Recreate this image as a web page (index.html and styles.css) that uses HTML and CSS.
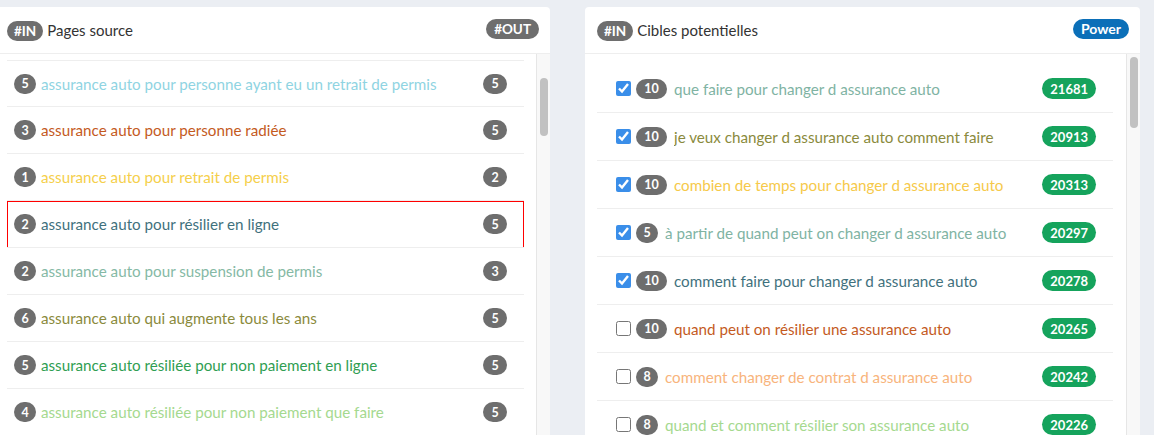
FILE: index.html
```html
<!DOCTYPE html>
<html lang="fr">
<head>
<meta charset="utf-8">
<title>Maillage</title>
<link rel="stylesheet" href="styles.css">
</head>
<body>
<div class="page">
  <section class="card card-left">
    <header class="card-head">
      <span class="pill">#IN</span>
      <span class="title">Pages source</span>
      <span class="pill pill-out">#OUT</span>
    </header>
    <div class="card-body">
      <ul class="list list-left">
        <li class="row"><span class="num">5</span><span class="label c-cyan">assurance auto pour personne ayant eu un retrait de permis</span><span class="num num-out">5</span></li>
        <li class="row"><span class="num">3</span><span class="label c-brown">assurance auto pour personne radiée</span><span class="num num-out">5</span></li>
        <li class="row"><span class="num">1</span><span class="label c-yellow">assurance auto pour retrait de permis</span><span class="num num-out">2</span></li>
        <li class="row selected"><span class="num">2</span><span class="label c-teal">assurance auto pour résilier en ligne</span><span class="num num-out">5</span></li>
        <li class="row"><span class="num">2</span><span class="label c-sage">assurance auto pour suspension de permis</span><span class="num num-out">3</span></li>
        <li class="row"><span class="num">6</span><span class="label c-olive">assurance auto qui augmente tous les ans</span><span class="num num-out">5</span></li>
        <li class="row"><span class="num">5</span><span class="label c-green">assurance auto résiliée pour non paiement en ligne</span><span class="num num-out">5</span></li>
        <li class="row"><span class="num">4</span><span class="label c-lime">assurance auto résiliée pour non paiement que faire</span><span class="num num-out">5</span></li>
      </ul>
      <div class="scrollbar"><div class="thumb thumb-left"></div></div>
    </div>
  </section>

  <section class="card card-right">
    <header class="card-head">
      <span class="pill">#IN</span>
      <span class="title">Cibles potentielles</span>
      <span class="pill pill-power">Power</span>
    </header>
    <div class="card-body">
      <ul class="list list-right">
        <li class="row"><input type="checkbox" class="check" checked><span class="num num-wide">10</span><span class="label c-sage2">que faire pour changer d assurance auto</span><span class="score">21681</span></li>
        <li class="row"><input type="checkbox" class="check" checked><span class="num num-wide">10</span><span class="label c-olive">je veux changer d assurance auto comment faire</span><span class="score">20913</span></li>
        <li class="row"><input type="checkbox" class="check" checked><span class="num num-wide">10</span><span class="label c-yellow2">combien de temps pour changer d assurance auto</span><span class="score">20313</span></li>
        <li class="row"><input type="checkbox" class="check" checked><span class="num">5</span><span class="label c-sage2">à partir de quand peut on changer d assurance auto</span><span class="score">20297</span></li>
        <li class="row"><input type="checkbox" class="check" checked><span class="num num-wide">10</span><span class="label c-teal">comment faire pour changer d assurance auto</span><span class="score">20278</span></li>
        <li class="row"><input type="checkbox" class="check"><span class="num num-wide">10</span><span class="label c-brown">quand peut on résilier une assurance auto</span><span class="score">20265</span></li>
        <li class="row"><input type="checkbox" class="check"><span class="num">8</span><span class="label c-peach">comment changer de contrat d assurance auto</span><span class="score">20242</span></li>
        <li class="row"><input type="checkbox" class="check"><span class="num">8</span><span class="label c-lime">quand et comment résilier son assurance auto</span><span class="score">20226</span></li>
      </ul>
      <div class="scrollbar"><div class="thumb thumb-right"></div></div>
    </div>
  </section>
</div>
</body>
</html>
```

FILE: styles.css
```css
* { box-sizing: border-box; }
html, body { margin: 0; padding: 0; }
body {
  background: #ebeef3;
  font-family: "Lato", "Liberation Sans", sans-serif;
  color: #333;
  overflow: hidden;
}
.page {
  display: flex;
  gap: 35px;
  padding-top: 7px;
  height: 435px;
  overflow: hidden;
}
.card {
  background: #fff;
  border-radius: 0 4px 0 0;
  display: flex;
  flex-direction: column;
  overflow: hidden;
}
.card-left { width: 550px; }
.card-right { width: 555px; border-radius: 4px 4px 0 0; }

.card-head {
  height: 47px;
  border-bottom: 1px solid #eeeeee;
  display: flex;
  align-items: center;
  padding: 0 11px 1px 7px;
}
.card-right .card-head { padding: 0 11px 1px 12px; }
.title {
  font-size: 15px;
  color: #333;
  margin-left: 4px;
  flex: 1;
}
.pill {
  display: inline-flex;
  align-items: center;
  justify-content: center;
  height: 20px;
  padding: 0 7px;
  border-radius: 10px;
  background: #6e6e6e;
  color: #fff;
  font-weight: 700;
  font-size: 13.5px;
  margin-top: 3px;
}
.pill-out { margin-top: -2px; padding: 0 8px; }
.pill-power { background: #0b6fb8; margin-top: -2px; padding: 0 8px; font-size: 14px; }

.card-body {
  flex: 1;
  display: flex;
  min-height: 0;
}
.list {
  list-style: none;
  margin: 0;
  flex: 1;
}
.list-left { padding: 6px 12px 0 7px; }
.list-right { padding: 11px 13px 0 12px; }

.row {
  display: flex;
  align-items: center;
  border-bottom: 1px solid #eeeeee;
  font-size: 15.2px;
}
.list-left .row {
  height: 47px;
  padding: 0 17px 0 7px;
}
.list-left .row:first-child { border-top: 1px solid #eeeeee; }
.list-left .row.selected {
  border-bottom-color: #eeeeee;
  box-shadow: inset 1px 1px 0 #ff0000, inset -1px 0 0 #ff0000;
}
.list-right .row {
  height: 48px;
  padding: 0 17px 0 19px;
}

.num {
  display: inline-flex;
  align-items: center;
  justify-content: center;
  min-width: 22px;
  height: 20px;
  padding: 0 6px;
  border-radius: 10px;
  background: #6e6e6e;
  color: #fff;
  font-weight: 700;
  font-size: 12.5px;
  flex: none;
}
.num-wide { min-width: 31px; }
.num-out { margin-left: auto; min-width: 24px; }
.label { margin-left: 5px; flex: 1; white-space: nowrap; overflow: hidden; }
.list-right .label { margin-left: 7px; }

.check {
  margin: 0 5px 0 0;
  width: 15px;
  height: 15px;
  accent-color: #3a8ee9;
  flex: none;
}
.score {
  display: inline-flex;
  align-items: center;
  justify-content: center;
  height: 21px;
  min-width: 53px;
  padding: 0 8px;
  border-radius: 11px;
  background: #15a35c;
  color: #fff;
  font-weight: 700;
  font-size: 13px;
  flex: none;
}

.scrollbar {
  width: 14px;
  background: #f8f8f8;
  border-left: 1px solid #e6e6e6;
  flex: none;
  padding: 0 2px 0 3px;
}
.thumb {
  background: #c1c1c1;
  border-radius: 4px;
  width: 8px;
}
.thumb-left { margin-top: 24px; height: 58px; }
.thumb-right { margin-top: 3px; height: 71px; }

.c-cyan { color: #8fd4e2; }
.c-brown { color: #c45a1e; }
.c-yellow { color: #f5cf4b; }
.c-yellow2 { color: #f6c94a; }
.c-teal { color: #3f717d; }
.c-sage { color: #85b9a5; }
.c-sage2 { color: #80b3a3; }
.c-olive { color: #8a8a3c; }
.c-green { color: #2f9e52; }
.c-lime { color: #a5d98f; }
.c-peach { color: #f8b47c; }
```
